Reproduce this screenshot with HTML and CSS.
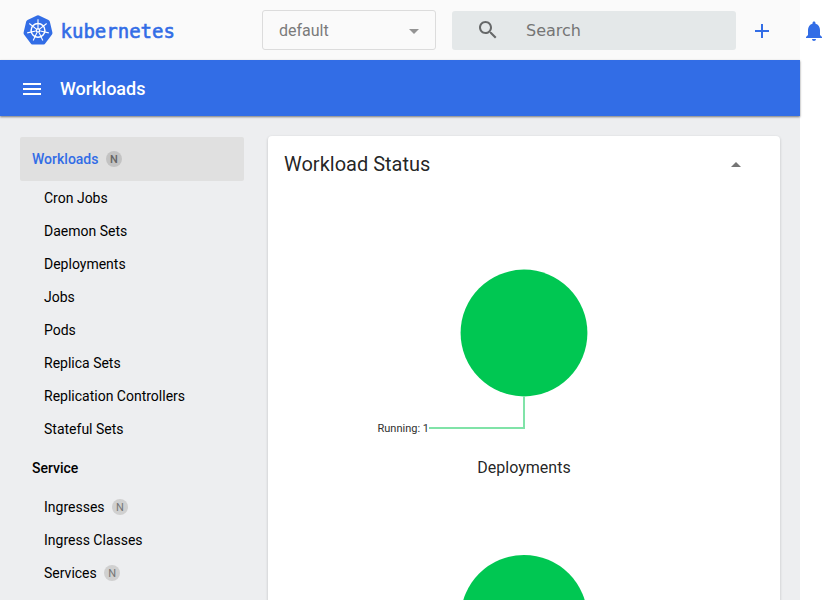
FILE: index.html
```
<!DOCTYPE html>
<html lang="en">
<head>
<meta charset="utf-8">
<title>Kubernetes Dashboard</title>
<link rel="stylesheet" href="styles.css">
</head>
<body>
<div class="app">
  <header class="topbar">
    <a class="brand">
      <svg class="logo" viewBox="0 0 30 30">
        <path class="hull" d="M14 .4Q15 0 16 .4L25.5 4.9Q26.5 5.4 26.8 6.5L29.4 17.4Q29.6 18.5 29 19.4L22.4 28.2Q21.700 29.400 20.6 29.400H9.4Q8.3 29.400 7.6 28.2L1 19.4Q.4 18.5.6 17.4L3.2 6.5Q3.5 5.4 4.5 4.9Z"/>
        <g class="wheel">
          <circle cx="15" cy="15.4" r="6.9"/>
          <g class="spokes">
            <path d="M15 13V4.3"/>
            <path d="M15 13V4.3" transform="rotate(51.43 15 15.4)"/>
            <path d="M15 13V4.3" transform="rotate(102.86 15 15.4)"/>
            <path d="M15 13V4.3" transform="rotate(154.29 15 15.4)"/>
            <path d="M15 13V4.3" transform="rotate(205.71 15 15.4)"/>
            <path d="M15 13V4.3" transform="rotate(257.14 15 15.4)"/>
            <path d="M15 13V4.3" transform="rotate(308.57 15 15.4)"/>
          </g>
          <circle cx="15" cy="15.4" r="1.7"/>
        </g>
      </svg>
      <span class="wordmark">kubernetes</span>
    </a>
    <div class="namespace">
      <span>default</span>
      <svg class="caret" viewBox="0 0 10 5"><path d="M0 0h10L5 5z"/></svg>
    </div>
    <div class="search">
      <svg class="icon" viewBox="0 0 24 24"><path d="M15.5 14h-.79l-.28-.27C15.41 12.59 16 11.11 16 9.5 16 5.91 13.09 3 9.5 3S3 5.91 3 9.5 5.91 16 9.5 16c1.61 0 3.09-.59 4.23-1.57l.27.28v.79l5 4.99L20.49 19l-4.99-5zm-6 0C7.01 14 5 11.99 5 9.5S7.01 5 9.5 5 14 7.01 14 9.5 11.99 14 9.5 14z"/></svg>
      <span>Search</span>
    </div>
    <svg class="icon action add" viewBox="0 0 24 24"><path d="M19 13h-6v6h-2v-6H5v-2h6V5h2v6h6v2z"/></svg>
    <svg class="icon action bell" viewBox="0 0 24 24"><path d="M12 22c1.1 0 2-.9 2-2h-4c0 1.1.89 2 2 2zm6-6v-5c0-3.07-1.64-5.64-4.5-6.32V4c0-.83-.67-1.5-1.5-1.5s-1.5.67-1.5 1.5v.68C7.63 5.36 6 7.92 6 11v5l-2 2v1h16v-1l-2-2z"/></svg>
  </header>
  <div class="toolbar">
    <svg class="icon" viewBox="0 0 24 24"><path d="M3 18h18v-2H3v2zm0-5h18v-2H3v2zm0-7v2h18V6H3z"/></svg>
    <h1>Workloads</h1>
  </div>
  <main class="content">
    <nav class="nav">
      <a class="group active">Workloads<span class="badge">N</span></a>
      <a class="item">Cron Jobs</a>
      <a class="item">Daemon Sets</a>
      <a class="item">Deployments</a>
      <a class="item">Jobs</a>
      <a class="item">Pods</a>
      <a class="item">Replica Sets</a>
      <a class="item">Replication Controllers</a>
      <a class="item">Stateful Sets</a>
      <a class="group section">Service</a>
      <a class="item">Ingresses<span class="badge">N</span></a>
      <a class="item">Ingress Classes</a>
      <a class="item">Services<span class="badge">N</span></a>
    </nav>
    <section class="card">
      <div class="card-head">
        <h2>Workload Status</h2>
        <svg class="caret" viewBox="0 0 10 5"><path d="M0 5h10L5 0z"/></svg>
      </div>
      <figure class="chart">
        <svg viewBox="0 0 320 250">
          <circle class="pie" cx="160" cy="105" r="63.4"/>
          <path class="leader" d="M160 168.500V200H65"/>
          <text x="65" y="204" text-anchor="end">Running: 1</text>
        </svg>
        <figcaption>Deployments</figcaption>
      </figure>
      <figure class="chart">
        <svg viewBox="0 0 320 250">
          <circle class="pie" cx="160" cy="105.300" r="63.4"/>
        </svg>
      </figure>
    </section>
  </main>
</div>
</body>
</html>
```
FILE: styles.css
```
* { box-sizing: border-box; }
html, body { height: 100%; overflow: hidden; }
body {
  margin: 0;
  background: #fff;
  color: rgba(0, 0, 0, .87);
  font: 14px/20px Roboto, sans-serif;
}
svg { display: block; flex: none; }
h1, h2, figure { margin: 0; }
.app { width: 800px; height: 600px; display: flex; flex-direction: column; }
.icon { width: 24px; height: 24px; fill: currentColor; }

.topbar {
  flex: none;
  height: 60px;
  display: flex;
  align-items: center;
  padding-left: 23px;
  background: #fafafa;
}
.brand {
  width: 239px;
  flex: none;
  display: flex;
  align-items: center;
  color: #326de6;
}
.logo { width: 30px; height: 30px; }
.hull { fill: #326de6; }
.wheel { fill: none; stroke: #fff; stroke-width: 1.5; }
.spokes { stroke-width: 1.1; }
.wordmark {
  margin-left: 7.500px;
  padding-top: 1px;
  font: 19px/30px "DejaVu Sans Mono", monospace;
  -webkit-text-stroke: .6px #326de6;
}
.namespace {
  flex: none;
  width: 174px;
  height: 40px;
  padding: 1px 16px 0;
  display: flex;
  align-items: center;
  justify-content: space-between;
  border: 1px solid #dcdcdc;
  border-radius: 3px;
  color: #7b7b7b;
  font-size: 16px;
}
.caret { width: 10px; height: 5px; fill: #757575; }
.namespace .caret { fill: #949494; margin-top: 1px; }
.search {
  flex: none;
  width: 284px;
  height: 39px;
  margin: 1px 0 0 16px;
  padding-left: 24px;
  display: flex;
  align-items: center;
  gap: 26px;
  border-radius: 3px;
  background: #e4e8e9;
  color: #757575;
  font: 16px/20px "DejaVu Sans", sans-serif;
}
.search .icon { color: #666869; margin-bottom: 1px; }
.action { color: #326de6; margin-top: 2px; }
.add { margin-left: 14px; }
.bell { margin-left: 28px; }

.toolbar {
  flex: none;
  height: 56px;
  display: flex;
  align-items: center;
  gap: 16px;
  padding: 2px 20px 0;
  background: #326de6;
  color: #fff;
  box-shadow: 0 1px 2px rgba(0, 0, 0, .5);
  position: relative;
}
.toolbar h1 { font-size: 18px; font-weight: 500; line-height: 24px; }

.content {
  flex: 1;
  min-height: 0;
  overflow: hidden;
  display: flex;
  align-items: flex-start;
  gap: 24px;
  padding: 20px;
  background: #edeef0;
}
.nav { flex: none; width: 224px; padding-top: 1px; color: #000; }
.group, .item { display: flex; align-items: center; }
.group { height: 44px; padding: 0 12px; border-radius: 2px; font-weight: 500; }
.section { margin-top: 1px; }
.item { height: 33px; padding: 1px 24px 0; }
.active { background: #e0e0e0; color: #326de6; }
.badge {
  width: 16px;
  height: 16px;
  margin-left: 7.500px;
  border-radius: 50%;
  background: #d0d0d0;
  color: #757575;
  font-size: 11px;
  line-height: 17px;
  text-align: center;
}
.active .badge { background: #c3c3c3; color: #666; }

.card {
  flex: none;
  width: 512px;
  height: 700px;
  border-radius: 4px;
  background: #fff;
  box-shadow: 0 1px 3px rgba(0, 0, 0, .2);
}
.card-head {
  height: 56px;
  display: flex;
  align-items: center;
  justify-content: space-between;
  padding: 0 39px 0 16px;
}
.card-head h2 { font-size: 20px; font-weight: 400; line-height: 28px; }
.card-head .caret { margin-top: 1px; }
.chart { height: 285px; padding-top: 36px; }
.chart svg { width: 320px; height: 250px; margin: 0 auto; overflow: visible; }
.chart text { font-size: 11px; fill: #303030; }
.pie { fill: #00c752; }
.leader { fill: none; stroke: #80e3a8; stroke-width: 2; }
.chart figcaption { margin-top: -20px; font-size: 16px; line-height: 20px; text-align: center; }
```
